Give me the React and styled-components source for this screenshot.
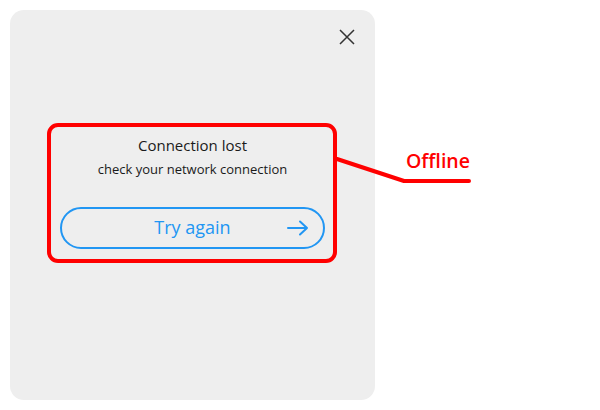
import React from "react";
import styled, { createGlobalStyle } from "styled-components";

const Global = createGlobalStyle`
  html, body { margin: 0; padding: 0; background: #fff; }
  body { font-family: "Open Sans", "Noto Sans", sans-serif; width: 600px; height: 410px; overflow: hidden; }
`;

const Stage = styled.div`
  position: relative;
  width: 600px;
  height: 410px;
  padding: 10px 0 0 10px;
  box-sizing: border-box;
`;

const Panel = styled.div`
  width: 365px;
  height: 390px;
  border-radius: 14px;
  background: #eeeeee;
  box-sizing: border-box;
  padding: 19px 20px 0 37px;
  display: flex;
  flex-direction: column;
`;

const TopBar = styled.div`
  display: flex;
  justify-content: flex-end;
  height: 16px;
`;

const CloseButton = styled.button`
  width: 16px;
  height: 16px;
  padding: 0;
  border: 0;
  background: none;
  display: flex;
  cursor: pointer;
`;

const Card = styled.div`
  margin-top: 78px;
  width: 290px;
  height: 140px;
  box-sizing: border-box;
  border: 4px solid #ff0000;
  border-radius: 11px;
  padding: 8px 8px 0 9px;
  display: flex;
  flex-direction: column;
  align-items: center;
`;

const Title = styled.div`
  font-size: 15px;
  line-height: 20px;
  color: #1a1a1a;
`;

const Subtitle = styled.div`
  margin-top: 5px;
  font-size: 13px;
  line-height: 18px;
  color: #1a1a1a;
`;

const RetryButton = styled.button`
  position: relative;
  margin-top: 29px;
  width: 265px;
  height: 42px;
  box-sizing: border-box;
  border: 2px solid #2196f3;
  border-radius: 21px;
  background: transparent;
  color: #2196f3;
  font-family: "Open Sans", "Noto Sans", sans-serif;
  font-size: 18px;
  display: flex;
  align-items: center;
  justify-content: center;
  padding: 0 0 2px 0;
  cursor: pointer;
`;

const ArrowIcon = styled.svg`
  position: absolute;
  right: 14px;
  top: 50%;
  margin-top: -8px;
`;

const Annotation = styled.svg`
  position: absolute;
  left: 0;
  top: 0;
  pointer-events: none;
`;

const Label = styled.div`
  position: absolute;
  left: 406px;
  top: 148px;
  font-size: 19.5px;
  font-weight: 600;
  color: #ff0000;
  line-height: 26px;
`;

export default function App() {
  return (
    <>
      <Global />
      <Stage>
        <Panel>
          <TopBar>
            <CloseButton aria-label="Close">
              <svg width="16" height="16" viewBox="0 0 16 16">
                <path d="M1 1 L15 15 M15 1 L1 15" stroke="#333" strokeWidth="1.5" fill="none" />
              </svg>
            </CloseButton>
          </TopBar>
          <Card>
            <Title>Connection lost</Title>
            <Subtitle>check your network connection</Subtitle>
            <RetryButton>
              Try again
              <ArrowIcon width="22" height="16" viewBox="0 0 22 16">
                <path d="M1 8 H20 M13 1.5 L20 8 L13 14.5" stroke="#2196f3" strokeWidth="2" fill="none" strokeLinecap="round" strokeLinejoin="round" />
              </ArrowIcon>
            </RetryButton>
          </Card>
        </Panel>
        <Annotation width="600" height="410">
          <path d="M337 159 L404 181 L469 181" stroke="#ff0000" strokeWidth="4" fill="none" strokeLinecap="round" strokeLinejoin="round" />
        </Annotation>
        <Label>Offline</Label>
      </Stage>
    </>
  );
}
